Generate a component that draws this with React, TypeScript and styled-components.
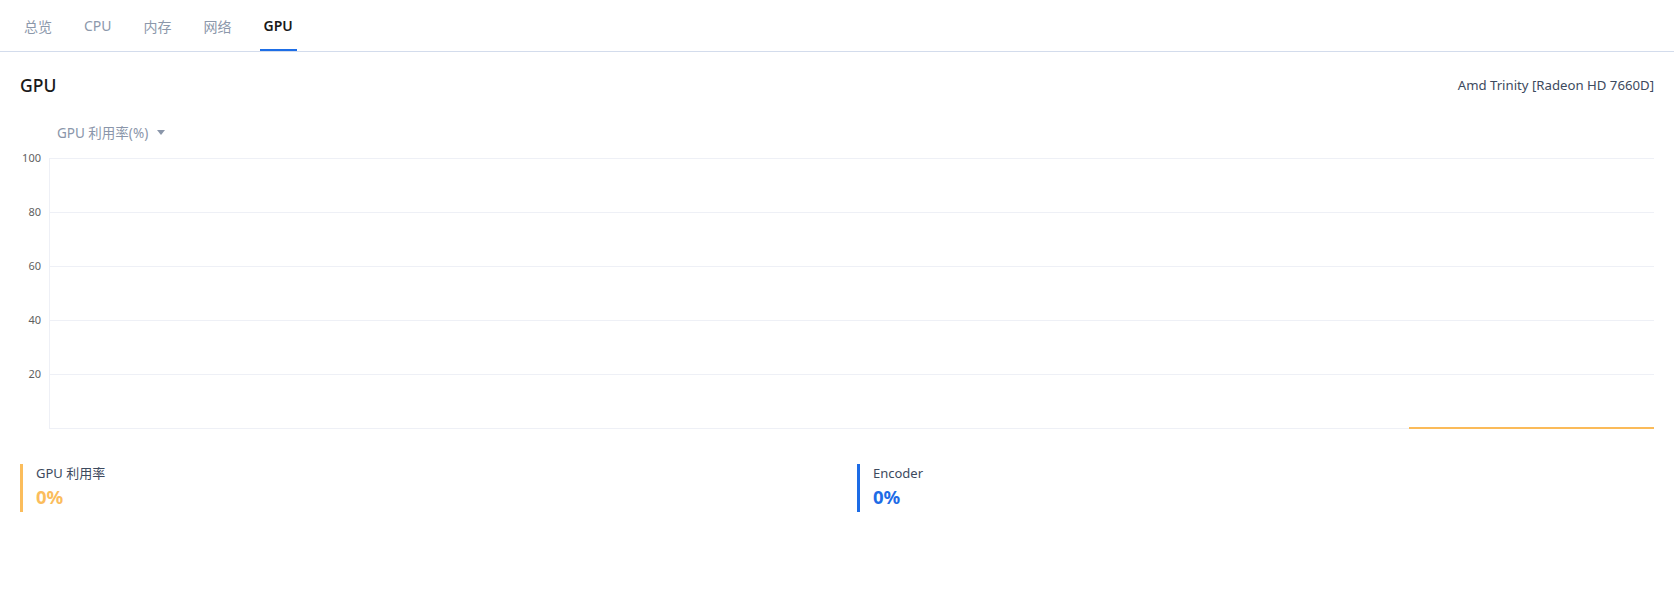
import React from 'react';
import styled, {createGlobalStyle} from 'styled-components';

const GlobalStyle = createGlobalStyle`
  html, body {
    margin: 0;
    padding: 0;
    background: #ffffff;
  }

  body {
    font-family: "Noto Sans", "Open Sans", "Noto Sans CJK SC", sans-serif;
    color: #1c1c1c;
  }
`;

const tabs = ['总览', 'CPU', '内存', '网络', 'GPU'];
const yTicks = [100, 80, 60, 40, 20];

// last samples of the series, as fraction of the plot width
const seriesStart = 0.847;

export default function App() {
    return (
        <>
            <GlobalStyle/>
            <TabBar>
                {tabs.map(t => (
                    <Tab key={t} active={t === 'GPU'}>{t}</Tab>
                ))}
            </TabBar>

            <Page>
                <Header>
                    <Title>GPU</Title>
                    <DeviceName>Amd Trinity [Radeon HD 7660D]</DeviceName>
                </Header>

                <MetricSelect>
                    GPU 利用率(%)
                    <Caret/>
                </MetricSelect>

                <Chart>
                    <YAxis>
                        {yTicks.map(v => (
                            <Tick key={v}>{v}</Tick>
                        ))}
                    </YAxis>
                    <Plot>
                        {yTicks.map(v => (
                            <GridRow key={v}/>
                        ))}
                        <SeriesLine style={{left: `${seriesStart * 100}%`}}/>
                    </Plot>
                </Chart>

                <Stats>
                    <StatCard accent="#fbbd5c">
                        <StatLabel>GPU 利用率</StatLabel>
                        <StatValue accent="#fbbd5c">0%</StatValue>
                    </StatCard>
                    <StatCard accent="#1d6ce6">
                        <StatLabel>Encoder</StatLabel>
                        <StatValue accent="#1d6ce6">0%</StatValue>
                    </StatCard>
                </Stats>
            </Page>
        </>
    )
}

const TabBar = styled.div`
  display: flex;
  gap: 24px;
  padding: 0 20px;
  height: 51px;
  border-bottom: 1px solid #d3dcec;
`;

const Tab = styled.div<{ active?: boolean }>`
  display: flex;
  align-items: center;
  padding: 2px 4px 0 4px;
  font-size: 14px;
  color: ${p => p.active ? '#1a1a1a' : '#8c98ab'};
  font-weight: ${p => p.active ? 600 : 400};
  border-bottom: 2px solid ${p => p.active ? '#1e6ee6' : 'transparent'};
  box-sizing: border-box;
`;

const Page = styled.div`
  padding: 20px 20px 0 20px;
`;

const Header = styled.div`
  display: flex;
  justify-content: space-between;
  align-items: center;
  height: 26px;
`;

const Title = styled.div`
  font-size: 17.5px;
  font-weight: 500;
  color: #1a1a1a;
`;

const DeviceName = styled.div`
  font-size: 13.2px;
  color: #3d4a5e;
`;

const MetricSelect = styled.div`
  display: flex;
  align-items: center;
  gap: 6px;
  margin: 25px 0 0 37px;
  height: 18px;
  font-size: 13.5px;
  color: #8a96aa;
`;

const Caret = styled.span`
  width: 0;
  height: 0;
  border-left: 4px solid transparent;
  border-right: 4px solid transparent;
  border-top: 5px solid #8a96aa;
  margin-left: 3px;
`;

const Chart = styled.div`
  display: flex;
  margin-top: 17px;
`;

const YAxis = styled.div`
  width: 29px;
  display: grid;
  grid-auto-rows: 54px;
`;

const Tick = styled.div`
  font-size: 11px;
  line-height: 14px;
  color: #5f5f5f;
  text-align: right;
  padding-right: 8px;
  margin-top: -7px;
`;

const Plot = styled.div`
  position: relative;
  flex: 1;
  display: grid;
  grid-auto-rows: 54px;
  border-left: 1px solid #eef0f6;
  border-bottom: 1px solid #eef0f6;
`;

const GridRow = styled.div`
  border-top: 1px solid #eef0f6;
`;

const SeriesLine = styled.div`
  position: absolute;
  right: 0;
  bottom: -1px;
  height: 2px;
  background: #fbbb59;
`;

const Stats = styled.div`
  display: grid;
  grid-template-columns: 1fr 1fr;
  gap: 40px;
  margin-top: 35px;
`;

const StatCard = styled.div<{ accent: string }>`
  border-left: 3px solid ${p => p.accent};
  padding-left: 13px;
  height: 48px;
  display: flex;
  flex-direction: column;
  gap: 3px;
`;

const StatLabel = styled.div`
  font-size: 13px;
  line-height: 18px;
  color: #3d4a5e;
`;

const StatValue = styled.div<{ accent: string }>`
  font-size: 18.5px;
  line-height: 24px;
  font-weight: 700;
  color: ${p => p.accent};
`;
